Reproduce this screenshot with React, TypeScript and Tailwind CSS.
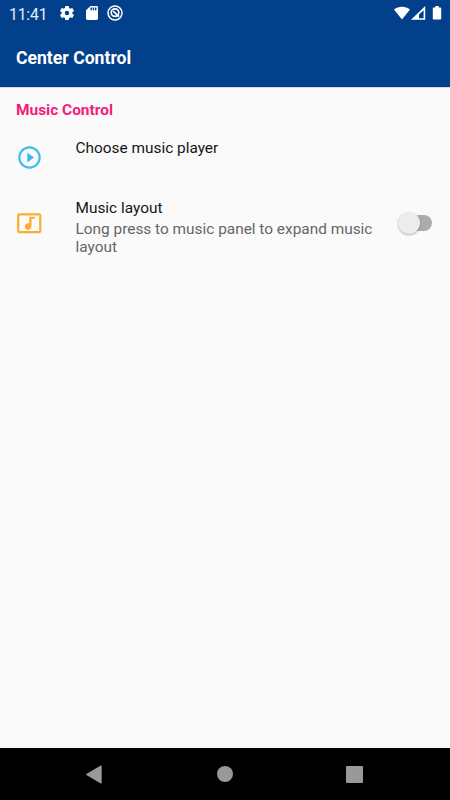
import React from 'react';

function StatusBar() {
  return (
    <div className="flex h-[27px] items-start pl-[9px] pr-[7px] pt-[5px] text-white">
      <span className="w-[50px] whitespace-nowrap pt-px text-[15.700px] leading-[18px] tracking-[-0.150px] text-[#e6edf6]">11:41</span>
      <svg className="h-4 w-4 shrink-0" viewBox="1.2 1.2 21.6 21.6" fill="currentColor">
        <path d="M19.14 12.94c.04-.3.06-.61.06-.94 0-.32-.02-.64-.07-.94l2.03-1.58c.18-.14.23-.41.12-.61l-1.92-3.32c-.12-.22-.37-.29-.59-.22l-2.39.96c-.5-.38-1.03-.7-1.62-.94l-.36-2.54c-.04-.24-.24-.41-.48-.41h-3.84c-.24 0-.43.17-.47.41l-.36 2.54c-.59.24-1.13.57-1.62.94l-2.39-.96c-.22-.08-.47 0-.59.22L2.74 8.87c-.12.21-.08.47.12.61l2.03 1.58c-.05.3-.09.63-.09.94s.02.64.07.94l-2.03 1.58c-.18.14-.23.41-.12.61l1.92 3.32c.12.22.37.29.59.22l2.39-.96c.5.38 1.03.7 1.62.94l.36 2.54c.05.24.24.41.48.41h3.84c.24 0 .44-.17.47-.41l.36-2.54c.59-.24 1.13-.56 1.62-.94l2.39.96c.22.08.47 0 .59-.22l1.92-3.32c.12-.22.07-.47-.12-.61l-2.01-1.58zM12 15a3 3 0 1 1 0-6 3 3 0 0 1 0 6z" />
      </svg>
      <svg className="ml-[10.500px] mt-px h-[14px] w-[12px] shrink-0" viewBox="4 2 16 20" preserveAspectRatio="none" fill="currentColor">
        <path d="M18 2h-8L4 8v12c0 1.100.9 2 2 2h12c1.100 0 2-.9 2-2V4c0-1.100-.9-2-2-2zm-6 6h-2V4h2v4zm3 0h-2V4h2v4zm3 0h-2V4h2v4z" />
      </svg>
      <svg className="ml-[9.500px] h-4 w-4 shrink-0" viewBox="0 0 16 16" fill="none" stroke="currentColor">
        <circle cx="8" cy="8" r="7" strokeWidth="1.500" />
        <circle cx="8" cy="7.600" r="3.800" strokeWidth="1.700" />
        <path d="M6.200 6.200L12 11.600" strokeWidth="1.700" />
      </svg>
      <svg className="ml-auto mt-px h-[14px] w-4 shrink-0" viewBox="0 0 16 14" fill="currentColor">
        <path d="M8 13.500L0 3.500C4.500-.3 11.500-.3 16 3.500z" />
      </svg>
      <svg className="ml-[0.500px] mt-px h-[14px] w-[15px] shrink-0" viewBox="0 0 15 14" fill="currentColor">
        <path fillRule="evenodd" d="M0 13.700L14.200 0v13.700zM8 12.200h4.600V4.200L8 8.600z" />
      </svg>
      <svg className="ml-[6.500px] mt-px h-[14px] w-[11px] shrink-0" viewBox="0 0 11 14" fill="currentColor">
        <path d="M3.300 0h3.400v1.500h1.700q.8 0 .8.800v10.500q0 .8-.8.800H1.600q-.8 0-.8-.8V2.300q0-.8.8-.8h1.700z" />
      </svg>
    </div>
  );
}

function Toggle() {
  return (
    <div className="mt-[22px] flex h-6 w-[35px] shrink-0 items-center">
      <div className="flex h-4 w-[34px] items-center rounded-full bg-[#ababab]">
        <div className="h-[22px] w-[22px] shrink-0 rounded-full bg-[#ececec] shadow-[0_1px_2px_rgba(0,0,0,0.3)]" />
      </div>
    </div>
  );
}

function NavigationBar() {
  return (
    <nav className="flex h-[52px] items-center bg-black pl-[85px] text-[#999]">
      <svg className="h-[19px] w-[17px]" viewBox="0 0 17 19" fill="currentColor">
        <path d="M1.400 8.900L15.700.6q1-.5 1 .6v16.600q0 1.100-1 .6L1.400 10.100q-1-.6 0-1.200z" />
      </svg>
      <div className="ml-[115px] h-4 w-4 rounded-full bg-[#999]" />
      <div className="ml-[113px] h-[17px] w-[17px] rounded-[1px] bg-[#999]" />
    </nav>
  );
}

export default function App() {
  return (
    <div className="flex h-[800px] w-[450px] flex-col overflow-hidden bg-[#fafafa] font-[Roboto,sans-serif]">
      <header className="h-[87px] bg-[#03408b]">
        <StatusBar />
        <h1 className="ml-4 mt-[21px] text-[17.600px] font-bold leading-[21px] text-white">Center Control</h1>
      </header>
      <main className="flex-1 border-t border-[#d6dbe3]">
        <h2 className="ml-4 mt-3 text-[15.450px] font-bold leading-5 text-[#f31d78]">Music Control</h2>
        <div className="flex h-[69px] pl-4">
          <svg className="mt-[24px] h-[27px] w-[27px] text-[#3dbdec]" viewBox="0 0 24 24" fill="currentColor">
            <path d="M10 16.500l6-4.500-6-4.500v9zM12 2C6.480 2 2 6.480 2 12s4.480 10 10 10 10-4.480 10-10S17.520 2 12 2zm0 18c-4.410 0-8-3.590-8-8s3.590-8 8-8 8 3.590 8 8-3.590 8-8 8z" />
          </svg>
          <span className="ml-[32.500px] mt-[19px] text-[15.400px] leading-[18px] text-[#151515]">Choose music player</span>
        </div>
        <div className="flex pl-4 pr-[17px]">
          <svg className="mt-[21px] h-[26.500px] w-[26.500px] shrink-0 text-[#fdad2d]" viewBox="0 0 24 24" fill="currentColor">
            <path d="M21 3H3c-1.110 0-2 .89-2 2v14c0 1.100.89 2 2 2h18c1.100 0 2-.9 2-2V5c0-1.110-.9-2-2-2zm0 16H3V5h18v14zM8 15c0-1.660 1.340-3 3-3 .35 0 .69.070 1 .18V6h5v2h-3v7.030c-.02 1.640-1.350 2.970-3 2.970-1.660 0-3-1.340-3-3z" />
          </svg>
          <div className="ml-[33px] mt-[10px] flex-1 whitespace-nowrap text-[15.400px]">
            <p className="leading-[18px] text-[#151515]">Music layout</p>
            <p className="mt-[3px] leading-[18px] text-[#666]">Long press to music panel to expand music<br />layout</p>
          </div>
          <Toggle />
        </div>
      </main>
      <NavigationBar />
    </div>
  );
}
